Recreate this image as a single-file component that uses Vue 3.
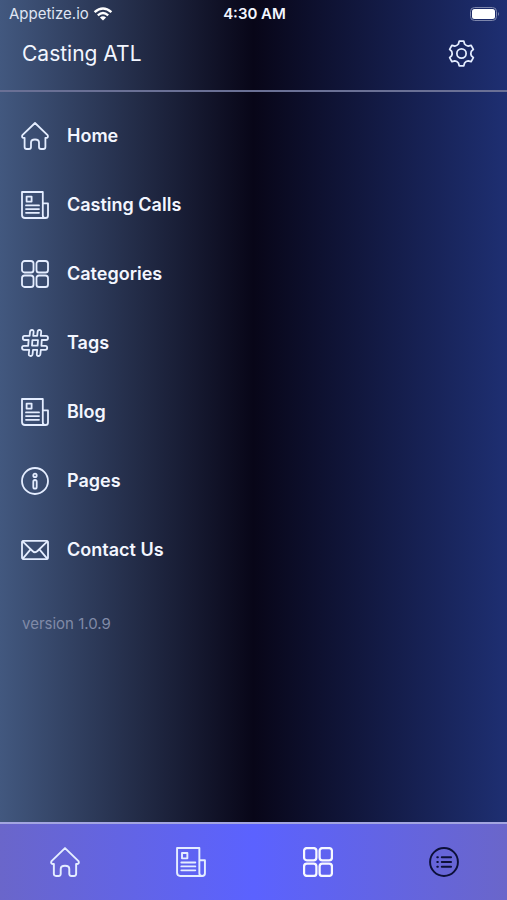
<script setup>
import { h } from 'vue'

const shapes = {
  home: [
    ['path', { d: 'M14 1 L26.6 13.2 Q27.6 15.6 25.4 15.8 H24.4 V25 Q24.4 27 22.4 27 H20 Q18 27 18 25 V20.5 Q18 17.5 14 17.5 Q10 17.5 10 20.5 V25 Q10 27 8 27 H5.6 Q3.6 27 3.6 25 V15.8 H2.6 Q.4 15.6 1.4 13.2 Z' }]
  ],
  news: [
    ['path', { d: 'M24 27 H4 Q1 27 1 24 V1 H21.8 V24.4 Q21.8 27 24.4 27 Q27 27 27 24.4 V12.4 H21.8' }],
    ['rect', { x: 5.6, y: 5.6, width: 5, height: 5 }],
    ['path', { d: 'M5 14.4 H18 M5 18.1 H18 M5 21.8 H18' }]
  ],
  grid: [1, 15.5].flatMap((x) =>
    [1, 15.5].map((y) => ['rect', { x, y, width: 11.5, height: 11.5, rx: 2.6 }])
  ),
  hash: [
    ['path', { d: 'M9 3 Q9.2 1 11 1 Q12.8 1 12.6 3 L12.2 6.9 H16.2 L16.6 3 Q16.8 1 18.4 1 Q20.4 1 20.2 3 L19.8 6.9 H25 Q27 6.9 27 9 Q27 11 25 11 H20.8 L20.4 16.8 H24.4 Q26.2 16.8 26.2 18.8 Q26.2 20.8 24.4 20.8 H19.8 L19.4 25 Q19.2 27 17.4 27 Q15.6 27 15.8 25 L16.2 20.8 H12 L11.6 25 Q11.4 27 9.6 27 Q7.6 27 7.8 25 L8.2 20.8 H3 Q1 20.8 1 18.8 Q1 16.8 3 16.8 H7.2 L7.6 11 H3.6 Q1.8 11 1.8 9 Q1.8 6.9 3.6 6.9 H8.6 Z M11.4 11.2 H17 L16.6 16.6 H11 Z' }]
  ],
  info: [
    ['circle', { cx: 14, cy: 14, r: 13 }],
    ['circle', { cx: 14, cy: 8.4, r: 1.7 }],
    ['rect', { x: 12.3, y: 13, width: 3.4, height: 8.6, rx: 1.7 }]
  ],
  mail: [
    ['rect', { x: 1, y: 4.8, width: 26, height: 18.4, rx: 1.6 }],
    ['path', { d: 'M1.6 5.4 L11.5 15 Q14 17.4 16.5 15 L26.4 5.4 M1.8 22.6 L9.6 13.4 M26.2 22.6 L18.4 13.4' }]
  ],
  gear: [
    ['path', { transform: 'translate(14 14)', d: 'M-3.2 -9.8 L-2.4 -12.8 H2.4 L3.2 -9.8 Q4.6 -8 6.9 -7.7 L9.9 -8.5 L12.3 -4.3 L10.1 -2.1 Q9.3 0 10.1 2.1 L12.3 4.3 L9.9 8.5 L6.9 7.7 Q4.6 8 3.2 9.8 L2.4 12.8 H-2.4 L-3.2 9.8 Q-4.6 8 -6.9 7.7 L-9.9 8.5 L-12.3 4.3 L-10.1 2.1 Q-9.3 0 -10.1 -2.1 L-12.3 -4.3 L-9.9 -8.5 L-6.9 -7.7 Q-4.6 -8 -3.2 -9.8 Z' }],
    ['circle', { cx: 14, cy: 14, r: 4.8 }]
  ],
  list: [
    ['circle', { cx: 14, cy: 14, r: 13 }],
    ['path', { d: 'M11.9 9.5 H20.6 M11.9 14 H20.6 M11.9 18.5 H20.6 M7.7 9.5 H8.3 M7.7 14 H8.3 M7.7 18.5 H8.3' }]
  ]
}

const Icon = (props) =>
  h('svg', { viewBox: '0 0 28 28', 'aria-hidden': 'true' }, shapes[props.name].map(([tag, attrs]) => h(tag, attrs)))
Icon.props = ['name']

const menu = [
  { label: 'Home', icon: 'home' },
  { label: 'Casting Calls', icon: 'news' },
  { label: 'Categories', icon: 'grid' },
  { label: 'Tags', icon: 'hash' },
  { label: 'Blog', icon: 'news' },
  { label: 'Pages', icon: 'info' },
  { label: 'Contact Us', icon: 'mail' }
]

const tabs = [
  { label: 'Home', icon: 'home' },
  { label: 'Casting Calls', icon: 'news' },
  { label: 'Categories', icon: 'grid', bold: true },
  { label: 'Menu', icon: 'list', active: true }
]
</script>

<template>
  <div class="screen">
    <div class="status">
      <div class="carrier">
        <span>Appetize.io</span>
        <svg class="wifi" viewBox="0 0 20 14" aria-hidden="true">
          <path d="M1.6 5.2 Q10 -2.4 18.4 5.2 M4.8 8.4 Q10 3.8 15.2 8.4" />
          <path class="solid" d="M10 13.6 L6.9 10.5 Q10 8 13.1 10.5 Z" />
        </svg>
      </div>
      <span class="time">4:30 AM</span>
      <svg class="battery" viewBox="0 0 30 14" aria-hidden="true">
        <rect class="shell" x=".5" y=".5" width="26" height="13" rx="4" />
        <rect class="charge" x="2" y="2" width="23" height="10" rx="2.5" />
        <path class="tip" d="M28 5 Q30 7 28 9 Z" />
      </svg>
    </div>

    <header class="header">
      <h1>Casting ATL</h1>
      <button type="button" class="settings" aria-label="Settings">
        <Icon name="gear" class="icon" />
      </button>
    </header>

    <main class="content">
      <nav>
        <a v-for="item in menu" :key="item.label" href="#" class="row">
          <Icon :name="item.icon" class="icon" />
          <span>{{ item.label }}</span>
        </a>
      </nav>
      <p class="version">version 1.0.9</p>
    </main>

    <nav class="tabs">
      <a
        v-for="tab in tabs"
        :key="tab.label"
        href="#"
        class="tab"
        :class="{ active: tab.active, bold: tab.bold }"
        :aria-label="tab.label"
      >
        <Icon :name="tab.icon" class="icon" />
      </a>
    </nav>
  </div>
</template>

<style>
body {
  margin: 0;
}
</style>

<style scoped>
.screen {
  display: flex;
  flex-direction: column;
  box-sizing: border-box;
  min-height: 100vh;
  color: #f3f6ff;
  font-family: Inter, "Liberation Sans", sans-serif;
  background: linear-gradient(90deg, #42587f 0%, #080618 50%, #1e2f72 100%);
}

.icon {
  display: block;
  width: 28px;
  height: 28px;
  fill: none;
  stroke: #e4edff;
  stroke-width: 1.8;
  stroke-linecap: round;
  stroke-linejoin: round;
}

.status {
  display: grid;
  grid-template-columns: 1fr auto 1fr;
  align-items: center;
  height: 27px;
  padding: 0 7px 0 9px;
  font-size: 15px;
}

.carrier {
  display: flex;
  align-items: center;
  gap: 4px;
  color: #dfe5f3;
}

.wifi {
  width: 20px;
  height: 14px;
  fill: none;
  stroke: #fff;
  stroke-width: 2.4;
}

.wifi .solid {
  fill: #fff;
  stroke: none;
}

.time {
  font-size: 15px;
  font-weight: 600;
}

.battery {
  justify-self: end;
  width: 30px;
  height: 14px;
}

.shell {
  fill: none;
  stroke: #7d86ac;
}

.charge {
  fill: #fff;
}

.tip {
  fill: #7d86ac;
}

.header {
  display: flex;
  align-items: center;
  justify-content: space-between;
  height: 65px;
  padding: 0 32px 10px 22px;
  box-sizing: border-box;
  border-bottom: 2px solid #6a7095;
}

h1 {
  margin: 0;
  font-size: 21px;
  font-weight: 400;
  line-height: 32px;
}

.settings {
  padding: 0;
  border: 0;
  background: none;
}

.settings .icon {
  width: 27px;
  height: 27px;
}

.content {
  flex: 1;
  padding: 9px 21px 24px;
}

.row {
  display: flex;
  align-items: center;
  gap: 18px;
  height: 69px;
  color: inherit;
  font-size: 18px;
  font-weight: 600;
  text-decoration: none;
}

.version {
  margin: 28px 0 0 1px;
  color: #808aa7;
  font-size: 15px;
  line-height: 24px;
}

.tabs {
  display: grid;
  grid-template-columns: repeat(4, 1fr);
  height: 78px;
  box-sizing: border-box;
  padding-left: 2px;
  border-top: 2px solid #a3a5e0;
  background: linear-gradient(90deg, #6a66ca 0%, #5b62ff 50%, #6a66ca 100%);
}

.tab {
  display: flex;
  align-items: center;
  justify-content: center;
}

.tab .icon {
  width: 30px;
  height: 30px;
}

.tab.bold .icon {
  stroke: #f6f8ff;
  stroke-width: 2.1;
}

.tab.active .icon {
  stroke: #0c1038;
}
</style>
